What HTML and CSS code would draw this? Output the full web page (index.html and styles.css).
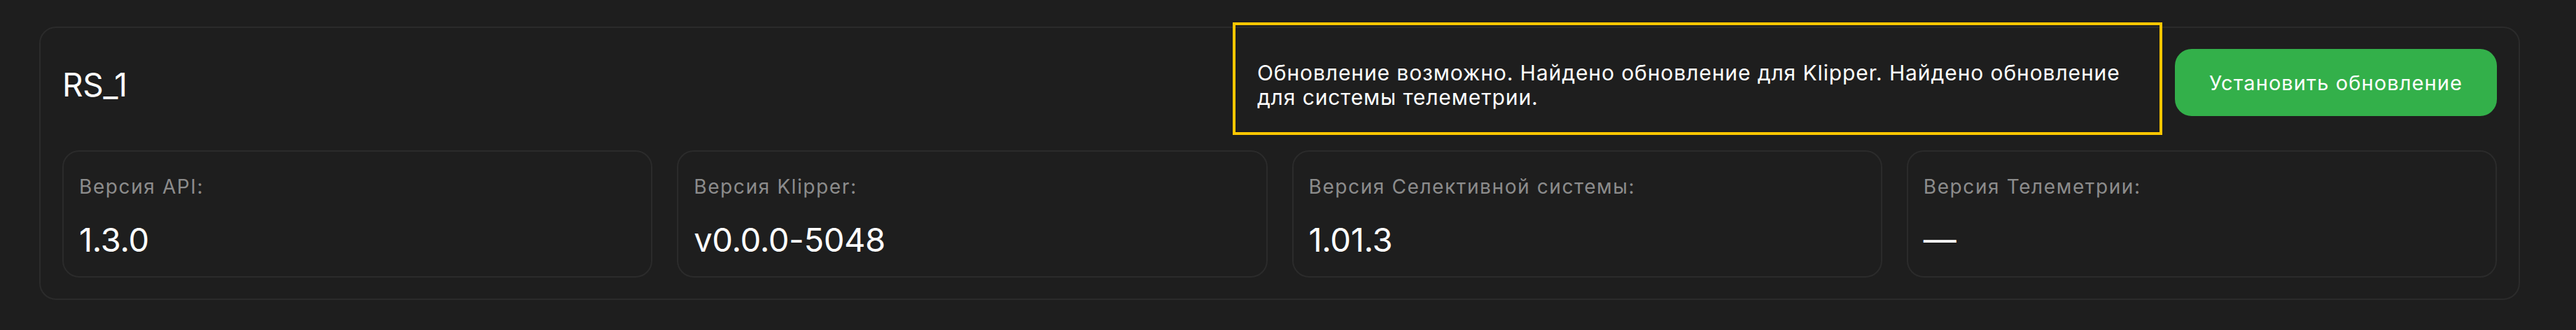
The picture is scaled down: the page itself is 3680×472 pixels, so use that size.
FILE: index.html
```html
<!DOCTYPE html>
<html lang="ru">
<head>
<meta charset="utf-8">
<title>RS_1</title>
<link rel="stylesheet" href="styles.css">
</head>
<body>
<main class="page">
  <section class="printer-card">
    <header class="printer-head">
      <h2 class="printer-name">RS_1</h2>
      <div class="notice">
        <p class="notice-text">Обновление возможно. Найдено обновление для Klipper. Найдено обновление для системы телеметрии.</p>
      </div>
      <button class="btn-install" type="button">Установить обновление</button>
    </header>
    <div class="versions">
      <div class="version-card">
        <div class="version-label">Версия API:</div>
        <div class="version-value">1.3.0</div>
      </div>
      <div class="version-card">
        <div class="version-label">Версия Klipper:</div>
        <div class="version-value">v0.0.0-5048</div>
      </div>
      <div class="version-card">
        <div class="version-label">Версия Селективной системы:</div>
        <div class="version-value">1.01.3</div>
      </div>
      <div class="version-card">
        <div class="version-label">Версия Телеметрии:</div>
        <div class="version-value">—</div>
      </div>
    </div>
  </section>
</main>
</body>
</html>
```

FILE: styles.css
```css
* { box-sizing: border-box; }

html, body {
  margin: 0;
  padding: 0;
  background: #1e1e1e;
  color: #ffffff;
  font-family: Inter, "Noto Sans", sans-serif;
}

.page {
  padding: 38px 0 0 56px;
}

.printer-card {
  width: 3544px;
  border: 2px solid #2b2b2b;
  border-radius: 24px;
  padding: 30px 31px;
  display: flex;
  flex-direction: column;
  gap: 49px;
}

.printer-head {
  display: flex;
  align-items: center;
  height: 96px;
}

.printer-name {
  margin: 0;
  flex: 1;
  font-size: 46px;
  font-weight: 400;
  line-height: 56px;
  padding-top: 6px;
  letter-spacing: -0.3px;
}

.notice {
  flex: none;
  width: 1328px;
  height: 161px;
  border: 4px solid #ffc700;
  margin-bottom: 11px;
  padding: 18px 24px 0 31px;
  display: flex;
  align-items: center;
}

.notice-text {
  margin: 0;
  font-size: 30px;
  line-height: 35px;
  letter-spacing: 0.9px;
  color: #ffffff;
}

.btn-install {
  flex: none;
  margin-left: 18px;
  height: 96px;
  padding: 0 49px;
  border: none;
  border-radius: 24px;
  background: #33b04a;
  color: #ffffff;
  font-family: Inter, "Noto Sans", sans-serif;
  font-size: 29px;
  font-weight: 400;
  letter-spacing: 1.1px;
}

.versions {
  display: grid;
  grid-template-columns: repeat(4, 1fr);
  gap: 35px;
}

.version-card {
  height: 182px;
  border: 2px solid #2b2b2b;
  border-radius: 24px;
  padding: 33px 22px 0;
  display: flex;
  flex-direction: column;
  gap: 31px;
}

.version-label {
  font-size: 28px;
  line-height: 34px;
  letter-spacing: 1.6px;
  color: #8c8c8c;
}

.version-value {
  font-size: 47px;
  line-height: 56px;
  color: #ffffff;
  letter-spacing: -0.3px;
}
```
